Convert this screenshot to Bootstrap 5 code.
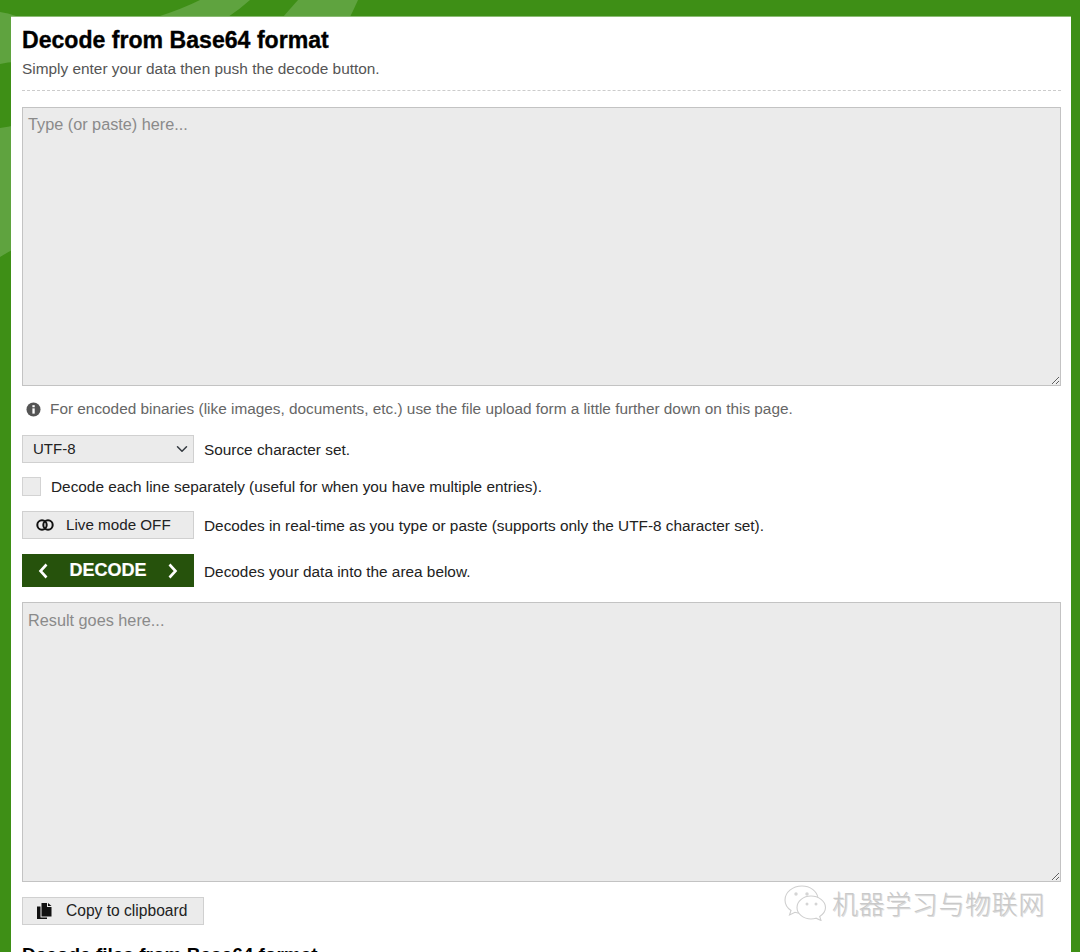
<!DOCTYPE html>
<html lang="en">
<head>
<meta charset="utf-8">
<title>Decode from Base64 format</title>
<link href="https://cdn.jsdelivr.net/npm/bootstrap@5.3.0/dist/css/bootstrap.min.css" rel="stylesheet">
<style>
html,body{height:952px;overflow:hidden}
body{background:#3e8f16;font-family:"Liberation Sans",Arial,sans-serif;font-size:15.36px;color:#222;position:relative;margin:0}
.bg-art{position:absolute;left:0;top:0;width:1080px;height:952px}
.sheet{position:relative;margin:16px 9px 0 11px;padding:9px 10px 0 11px;background:#fff;border-top:1px solid #8cbc74;height:936px;overflow:hidden}
.page-title{font-size:23.1px;line-height:28px;font-weight:700;color:#000;margin:0 0 6px;-webkit-text-stroke:.35px #000}
.page-sub{font-size:15.4px;line-height:18px;color:#555;margin:0}
.dash{border-top:1px dashed #ccc;margin:12px 0 16px}
.area.form-control{display:block;width:1039px;background:#ebebeb;border:1px solid #c3c3c3;border-radius:0;padding:7px 5px;font-size:16.25px;line-height:20px;color:#222;outline:0}
.area::placeholder{color:#8a8a8a;opacity:1}
.area.area-a{height:279px;padding-top:6px}
.area.area-b{height:280px}
.hint{display:flex;align-items:center;height:18px;margin:14px 0 0 4px;font-size:15.36px;color:#666;gap:9px}
.line{display:flex;align-items:center;font-size:15.36px;color:#222}
.pick.form-select{width:172px;height:28px;border:1px solid #d0d0d0;border-radius:0;background-color:#ebebeb;font-size:15px;line-height:20px;color:#222;padding:0 0 0 10px;background-position:right 4px center;background-size:14px 12px}
.tick.form-check-input{width:19px;height:19px;margin:0 10px 0 0;border:1px solid #d3d3d3;background:#ececec;border-radius:0;flex:none}
.gbtn.btn{height:28px;border:1px solid #d0d0d0;border-radius:0;background:#ebebeb;color:#222;font-size:15.2px;line-height:26px;padding:0;display:flex;align-items:center;flex:none}
.w-live.btn{width:172px}
.w-copy.btn{width:182px;font-size:15.6px}
.gbtn .ic{width:43px;display:flex;justify-content:center;flex:none}
.decode.btn{width:172px;height:33px;background:#26520c;border:0;border-radius:0;color:#fff;font-size:18px;font-weight:700;display:flex;align-items:center;justify-content:center;gap:20px;padding:0;-webkit-text-stroke:.2px #fff;flex:none}
.note{margin-left:10px;padding-top:1px}
.r1{margin-top:17px}
.r2{margin-top:12px}
.r3{margin-top:13px}
.r4{margin-top:15px}
.area-b-wrap{margin-top:15px}
.r5{margin-top:15px}
.next-title{font-size:19px;line-height:22px;font-weight:700;color:#000;margin:19px 0 0}
.mark-w{position:absolute;left:784px;top:885px;display:flex;align-items:center;gap:4px;color:#c9c9c9;font-family:"Noto Sans CJK SC",sans-serif;font-size:26px;line-height:32px;font-weight:300;letter-spacing:.6px;text-shadow:1px 1px 0 #dcdcdc}
</style>
</head>
<body>
<svg class="bg-art" viewBox="0 0 1080 952" aria-hidden="true">
<path fill="#5fa33f" d="M0 12Q8 13 16 16V62Q8 62 0 64Z"/>
<path fill="#5fa33f" d="M157 17Q182 9 200 0H250Q240 9 228 17Z"/>
<path fill="#5fa33f" d="M298 0H358Q354 9 350 17H283Q290 9 298 0Z"/>
<path fill="#5fa33f" d="M0 128Q8 127 16 125V248Q8 252 0 257Z"/>
</svg>
<div class="sheet">
<h1 class="page-title">Decode from Base64 format</h1>
<p class="page-sub">Simply enter your data then push the decode button.</p>
<div class="dash"></div>
<textarea class="form-control area area-a" placeholder="Type (or paste) here..."></textarea>
<div class="hint">
<svg width="15" height="15" viewBox="0 0 16 16"><circle cx="8" cy="8" r="7.5" fill="#555"/><rect x="6.8" y="6.8" width="2.5" height="5.6" fill="#fff"/><rect x="6.8" y="3.4" width="2.5" height="2.2" fill="#fff"/></svg>
<span>For encoded binaries (like images, documents, etc.) use the file upload form a little further down on this page.</span>
</div>
<div class="line r1">
<select class="form-select pick"><option>UTF-8</option></select>
<span class="note">Source character set.</span>
</div>
<div class="line r2">
<input type="checkbox" class="form-check-input tick" aria-label="Decode each line separately">
<span>Decode each line separately (useful for when you have multiple entries).</span>
</div>
<div class="line r3">
<button type="button" class="btn gbtn w-live"><span class="ic"><svg width="18" height="12" viewBox="0 0 18 12"><circle cx="6" cy="6" r="4.7" fill="none" stroke="#111" stroke-width="2"/><circle cx="12" cy="6" r="4.7" fill="none" stroke="#111" stroke-width="2"/></svg></span>Live mode OFF</button>
<span class="note">Decodes in real-time as you type or paste (supports only the UTF-8 character set).</span>
</div>
<div class="line r4">
<button type="button" class="btn decode"><svg width="12" height="16" viewBox="0 0 12 16"><path d="M9.500 1.500 3.500 8l6 6.500" fill="none" stroke="#fff" stroke-width="2.600"/></svg>DECODE<svg width="12" height="16" viewBox="0 0 12 16"><path d="M2.500 1.500l6 6.500-6 6.500" fill="none" stroke="#fff" stroke-width="2.600"/></svg></button>
<span class="note">Decodes your data into the area below.</span>
</div>
<div class="area-b-wrap"><textarea class="form-control area area-b" placeholder="Result goes here..."></textarea></div>
<div class="line r5">
<button type="button" class="btn gbtn w-copy"><span class="ic"><svg width="15" height="16" viewBox="0 0 15 16"><path fill="#111" d="M4.500 0h5.500v4h4.500v9.500H4.500z"/><path fill="#111" d="M11 0l3.500 3H11z"/><path fill="#111" d="M0 3.500h3.500v11h6.500V16H0z"/></svg></span>Copy to clipboard</button>
</div>
<h2 class="next-title">Decode files from Base64 format</h2>
</div>
<div class="mark-w">
<svg width="44" height="36" viewBox="0 0 44 36"><path d="M18 1C8.500 1 1 7.300 1 15c0 4.300 2.300 8 6 10.500L5.500 30l5.500-2.700 3 .7h20V13C33 6 26 1 18 1z" fill="#fff" stroke="#cfcfcf" stroke-width="1.100"/><path d="M27 11c-7.500 0-14 5-14 11.500S19.500 34 27 34c1.800 0 3.500-.3 5-.8l5 2.300-1.300-4C39.500 29 41.500 26 41.500 22.500 41.500 16 34.500 11 27 11z" fill="#fff" stroke="#cfcfcf" stroke-width="1.100"/><circle cx="12" cy="9" r="1.700" fill="#d5d5d5"/><circle cx="23" cy="9" r="1.700" fill="#d5d5d5"/><circle cx="23" cy="19" r="1.500" fill="#d5d5d5"/><circle cx="32" cy="19" r="1.500" fill="#d5d5d5"/></svg>
<span>机器学习与物联网</span>
</div>
<script src="https://cdn.jsdelivr.net/npm/bootstrap@5.3.0/dist/js/bootstrap.bundle.min.js"></script>
</body>
</html>
